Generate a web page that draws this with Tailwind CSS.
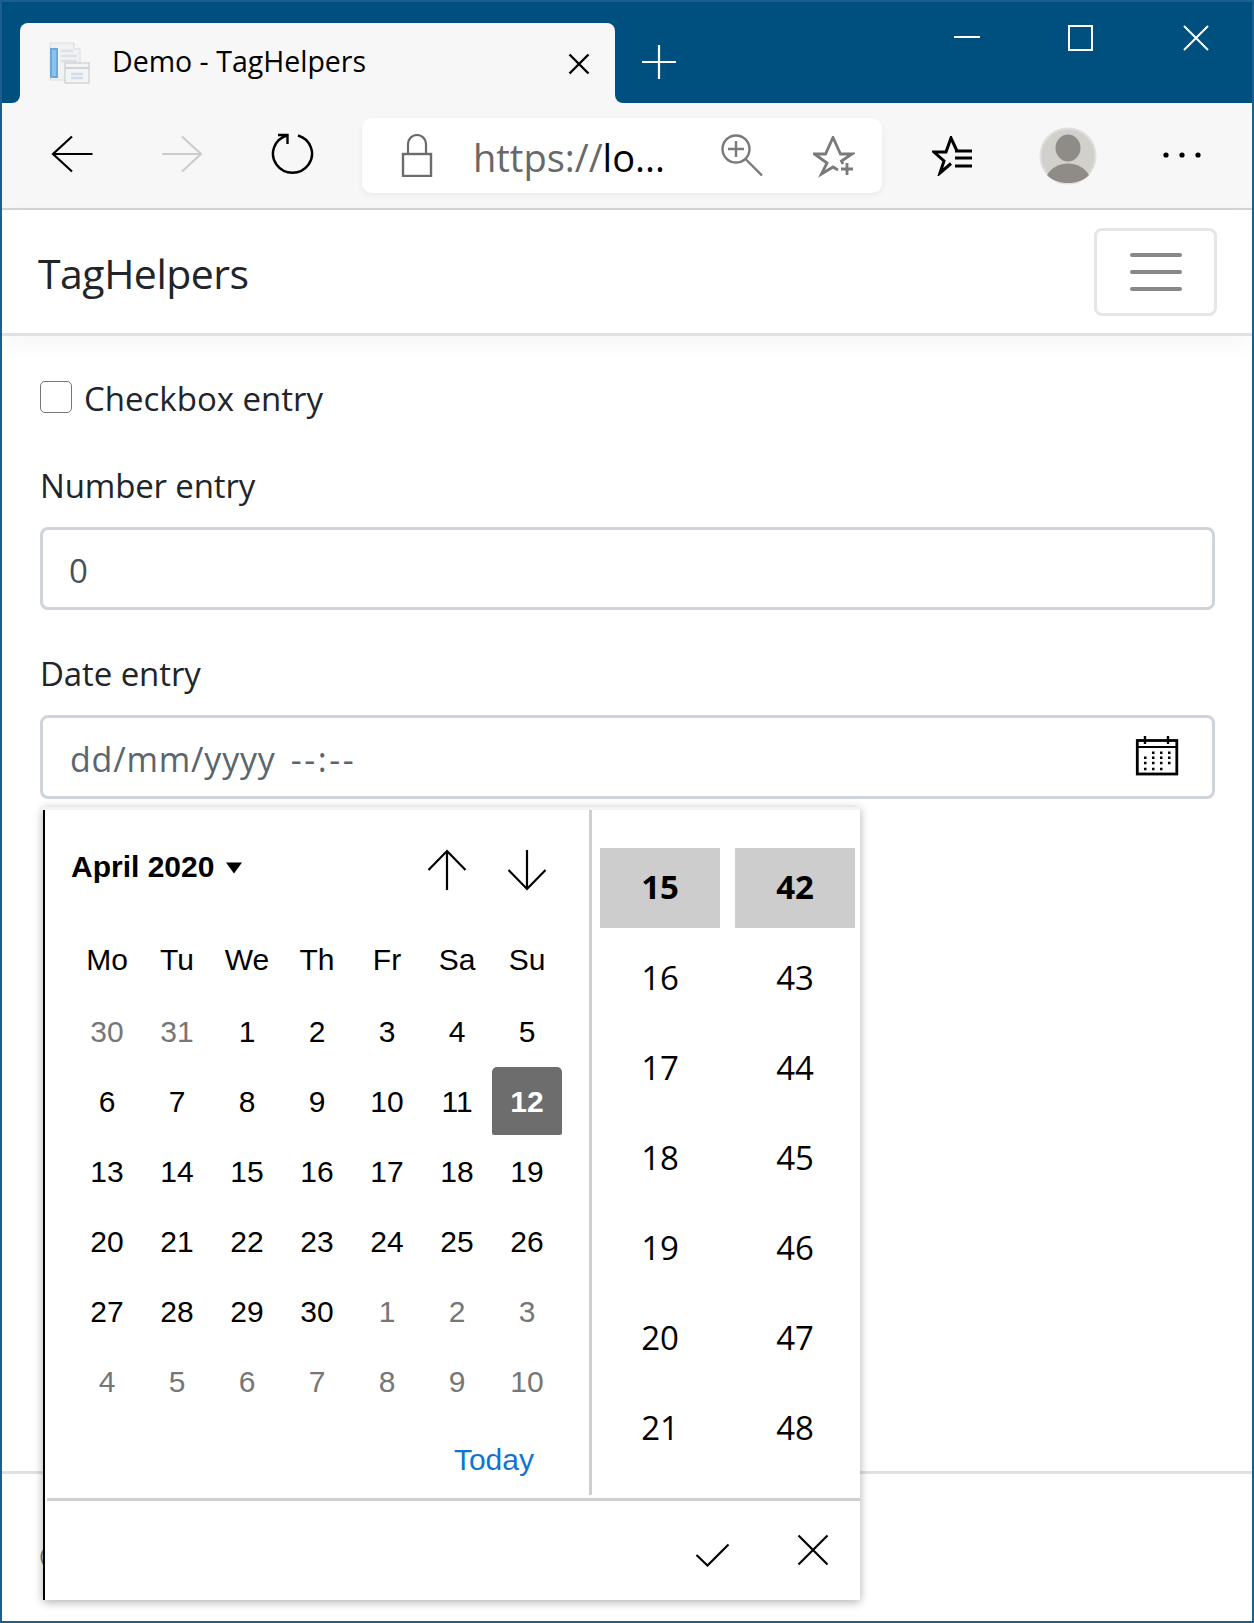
<!DOCTYPE html>
<html lang="en">
<head>
<meta charset="utf-8">
<title>Demo - TagHelpers</title>
<script src="https://cdn.jsdelivr.net/npm/@tailwindcss/browser@4"></script>
</head>
<body class="m-0 bg-white">
<div class="relative w-[1254px] h-[1623px] overflow-hidden border-2 border-[#1a5f8e] flex flex-col bg-white font-['Open_Sans',sans-serif] text-[#212529]">

  <!-- title bar -->
  <div class="relative h-[101px] shrink-0 bg-[#00507f] flex">
    <div class="relative ml-[18px] mt-[21px] w-[595px] h-[80px] bg-[#f7f7f7] rounded-t-lg flex items-center">
      <span class="absolute -left-2 bottom-0 w-2 h-2 bg-[#f7f7f7]"><span class="block w-2 h-2 bg-[#00507f] rounded-br-lg"></span></span>
      <span class="absolute -right-2 bottom-0 w-2 h-2 bg-[#f7f7f7]"><span class="block w-2 h-2 bg-[#00507f] rounded-bl-lg"></span></span>
      <svg class="ml-[27px] shrink-0" width="44" height="42" viewBox="0 0 44 42">
        <path d="M3 1H27L33 7V38H3Z" fill="#eff1f3" stroke="#dedede"/>
        <path d="M27 1V7H33" fill="#fafafa" stroke="#d8d8d8"/>
        <rect x="3" y="6" width="8" height="30" fill="#6aa9de"/>
        <rect x="5" y="8" width="4" height="26" fill="#8fc0ea"/>
        <path d="M14 9H26M14 14H30M14 19H30" stroke="#dde1e6" stroke-width="2.5"/>
        <rect x="18" y="21" width="24" height="20" fill="#f3f4f5" stroke="#c6c6c6"/>
        <path d="M18 26H42" stroke="#c9c9c9" stroke-width="1.5"/>
        <path d="M24 32H36M24 36H36" stroke="#d3dce6" stroke-width="2.5"/>
      </svg>
      <span class="ml-[21px] mb-[3px] text-[28.5px] leading-none text-black whitespace-nowrap">Demo - TagHelpers</span>
      <svg class="absolute left-[548px] top-[30px]" width="22" height="22" viewBox="0 0 22 22"><path d="M1.5 1.5L20.5 20.5M20.5 1.5L1.5 20.5" stroke="#000" stroke-width="2.4" fill="none"/></svg>
    </div>
    <svg class="ml-[26px] mt-[42px]" width="36" height="36" viewBox="0 0 36 36"><path d="M18 1V35M1 18H35" stroke="#fff" stroke-width="2.2" fill="none"/></svg>
    <svg class="absolute left-[952px] top-[33px]" width="26" height="4" viewBox="0 0 26 4"><path d="M0 2H26" stroke="#fff" stroke-width="2"/></svg>
    <svg class="absolute left-[1066px] top-[23px]" width="25" height="26" viewBox="0 0 25 26"><rect x="1" y="1" width="23" height="24" fill="none" stroke="#fff" stroke-width="2"/></svg>
    <svg class="absolute left-[1181px] top-[23px]" width="26" height="26" viewBox="0 0 26 26"><path d="M1 1L25 25M25 1L1 25" stroke="#fff" stroke-width="2" fill="none"/></svg>
  </div>

  <!-- toolbar -->
  <div class="h-[107px] shrink-0 bg-[#f7f7f7] border-b-2 border-[#d3d3d3] flex items-start">
    <svg class="ml-[49px] mt-[32px] shrink-0" width="42" height="38" viewBox="0 0 42 38"><path d="M21 1.5L2 19L21 36.5M2 19H41.5" stroke="#000" stroke-width="2.2" fill="none"/></svg>
    <svg class="ml-[68px] mt-[32px] shrink-0" width="42" height="38" viewBox="0 0 42 38"><path d="M21 1.5L40 19L21 36.5M40 19H1" stroke="#cccccc" stroke-width="2.2" fill="none"/></svg>
    <svg class="ml-[67px] mt-[30px] shrink-0" width="44" height="42" viewBox="0 0 44 42"><path d="M28 2.5A19.5 19 0 1 1 17 2.5M8 2H17.5V11" stroke="#000" stroke-width="2.4" fill="none"/></svg>
    <div class="ml-[48px] mt-[15px] w-[520px] h-[75px] bg-white rounded-[10px] shadow-[0_2px_6px_rgba(0,0,0,0.06)] flex items-center shrink-0 relative">
      <svg class="absolute left-[39px] top-[16px]" width="32" height="43" viewBox="0 0 32 43"><path d="M7 20V10A9 9 0 0 1 25 10V20" stroke="#6b6b6b" stroke-width="2.2" fill="none"/><rect x="2" y="20" width="28" height="22" fill="none" stroke="#6b6b6b" stroke-width="2.4"/></svg>
      <span class="absolute left-[111px] top-[14px] text-[38px] leading-[50px] whitespace-nowrap text-[#686868]">https://<span class="text-black">lo...</span></span>
      <svg class="absolute left-[359px] top-[16px]" width="42" height="42" viewBox="0 0 42 42"><circle cx="15" cy="15" r="13.5" fill="none" stroke="#7a7a7a" stroke-width="2.4"/><path d="M24.5 25L41 41.5M15 7V23M7 15H23" stroke="#7a7a7a" stroke-width="2.4" fill="none"/></svg>
      <svg class="absolute left-[451px] top-[18px]" width="42" height="42" viewBox="0 0 42 42"><path d="M30 28L28.5 25L39 18H27.5L20 1.5L12.5 18H1.5L14 27L8.5 38L20 31L25 34" stroke="#7a7a7a" stroke-width="2.8" fill="none"/><path d="M34 27V39M28 33H40" stroke="#7a7a7a" stroke-width="2.8" fill="none"/></svg>
    </div>
    <svg class="ml-[50px] mt-[33px] shrink-0" width="42" height="40" viewBox="0 0 42 40"><path d="M25 15L19 2L14 16H2L12 25L8 37L19 27.5" stroke="#000" stroke-width="3" fill="none"/><path d="M23 15H40M23 22H40M23 30H40" stroke="#000" stroke-width="2.8" fill="none"/></svg>
    <svg class="ml-[65px] mt-[24px] shrink-0" width="58" height="58" viewBox="0 0 58 58"><circle cx="29" cy="29" r="27.5" fill="#d1d0cd" stroke="#e0dfdc" stroke-width="2"/><ellipse cx="29" cy="21" rx="12.5" ry="13.5" fill="#8f8c88"/><path d="M8 48C12 41 20 36.5 29 36.5C38 36.5 46 41 50 48C45 53.5 37 56 29 56C21 56 13 53.5 8 48Z" fill="#8f8c88"/></svg>
    <svg class="ml-[63px] mt-[49px] shrink-0" width="46" height="6" viewBox="0 0 46 6"><circle cx="6" cy="3" r="2.6" fill="#000"/><circle cx="22" cy="3" r="2.6" fill="#000"/><circle cx="38" cy="3" r="2.6" fill="#000"/></svg>
  </div>

  <!-- navbar -->
  <nav class="relative z-10 h-[126px] shrink-0 bg-white border-b-[3px] border-[#dee2e6] shadow-[0_8px_22px_rgba(0,0,0,0.04)] flex items-center justify-between pl-[36px] pr-[35px]">
    <span class="mt-[2px] text-[41px] leading-[50px] text-[#212529] tracking-[-0.5px]">TagHelpers</span>
    <button class="w-[123px] h-[88px] rounded-[8px] border-[3px] border-[#e6e6e6] flex flex-col items-center justify-center gap-[13px]">
      <span class="block w-[52px] h-[4px] rounded-full bg-[#888888]"></span>
      <span class="block w-[52px] h-[4px] rounded-full bg-[#888888]"></span>
      <span class="block w-[52px] h-[4px] rounded-full bg-[#888888]"></span>
    </button>
  </nav>

  <!-- form -->
  <main class="pl-[38px] pr-[37px] pt-[45px]">
    <label class="flex items-center h-[32px]">
      <input type="checkbox" class="appearance-none w-[32px] h-[32px] rounded-[5px] border border-[#767676] bg-white shrink-0">
      <span class="ml-[12px] mt-[4px] text-[33px] leading-[50px] text-[#212529]">Checkbox entry</span>
    </label>
    <div class="mt-[48px] h-[50px] mb-[16px] text-[33px] leading-[50px] tracking-[-0.15px]">Number entry</div>
    <div class="h-[83px] rounded-[8px] border-[3px] border-[#ced4da] flex items-center pl-[26px] text-[33px] text-[#495057]"><span class="mt-[5px]">0</span></div>
    <div class="mt-[39px] h-[50px] mb-[16px] text-[33px] leading-[50px] tracking-[-0.1px]">Date entry</div>
    <div class="h-[84px] rounded-[8px] border-[3px] border-[#ced4da] flex items-center justify-between pl-[27px] pr-[33px] text-[34px] text-[#5a6570]">
      <span class="mt-[4px] whitespace-nowrap tracking-[0.8px]">dd/mm/yyyy<span class="ml-[15px] tracking-[2.6px]">--:--</span></span>
      <svg class="mb-[2px]" width="44" height="40" viewBox="0 0 44 40"><rect x="2.3" y="4.5" width="39.5" height="33.5" fill="none" stroke="#000" stroke-width="2.8"/><path d="M2 11H42" stroke="#000" stroke-width="2.2"/><path d="M10 0V8M33 0V8" stroke="#000" stroke-width="2.4"/><path d="M17 16.7H38M9 21.7H38M9 27H38M9 33H29" stroke="#000" stroke-width="2.5" stroke-dasharray="2.5 5.5" fill="none"/></svg>
    </div>
  </main>

  <!-- footer -->
  <footer class="mt-auto h-[150px] shrink-0 border-t-[3px] border-[#dee2e6] pl-[37px] pt-[58px] text-[32px] leading-[50px] text-[#6c757d]">© 2020 - TagHelpers</footer>

  <!-- date-time picker popup -->
  <div class="absolute left-[41px] top-[805px] w-[817px] h-[793px] z-20 bg-white shadow-[0_2px_9px_rgba(0,0,0,0.32)] flex flex-col font-['Liberation_Sans',sans-serif] text-black">
    <div class="-ml-[2px] h-[3px] shrink-0 bg-[#f3f3f3]"></div>
    <div class="flex-1 border-l-2 border-black flex flex-col min-h-0">
      <div class="h-[685px] shrink-0 flex">
        <!-- calendar -->
        <div class="w-[544px] shrink-0 flex flex-col">
          <div class="h-[114px] shrink-0 flex items-center relative">
            <span class="ml-[26px] text-[30px] font-bold leading-none">April 2020</span>
            <svg class="ml-[11px] mt-[1px]" width="18" height="12" viewBox="0 0 18 12"><path d="M1 0.5H17L9 11.5Z" fill="#000"/></svg>
            <svg class="absolute left-[382px] top-[39px]" width="40" height="42" viewBox="0 0 40 42"><path d="M1.5 21L20 2L38.5 21M20 2V41" stroke="#000" stroke-width="2.2" fill="none"/></svg>
            <svg class="absolute left-[462px] top-[39px]" width="40" height="42" viewBox="0 0 40 42"><path d="M1.5 21L20 40L38.5 21M20 40V1" stroke="#000" stroke-width="2.2" fill="none"/></svg>
          </div>
          <div class="ml-[27px] grid grid-cols-[repeat(7,70px)] h-[70px] shrink-0 items-center text-center text-[30px]">
            <span>Mo</span><span>Tu</span><span>We</span><span>Th</span><span>Fr</span><span>Sa</span><span>Su</span>
          </div>
          <div class="ml-[27px] mt-[2px] grid grid-cols-[repeat(7,70px)] auto-rows-[70px] shrink-0 items-center justify-items-center text-[30px]">
            <span class="text-[#767676]">30</span><span class="text-[#767676]">31</span><span>1</span><span>2</span><span>3</span><span>4</span><span>5</span>
            <span>6</span><span>7</span><span>8</span><span>9</span><span>10</span><span>11</span>
            <span class="w-[70px] h-[68px] rounded-t-[5px] rounded-b-[2px] bg-[#6d6d6d] text-white font-bold flex items-center justify-center">12</span>
            <span>13</span><span>14</span><span>15</span><span>16</span><span>17</span><span>18</span><span>19</span>
            <span>20</span><span>21</span><span>22</span><span>23</span><span>24</span><span>25</span><span>26</span>
            <span>27</span><span>28</span><span>29</span><span>30</span><span class="text-[#767676]">1</span><span class="text-[#767676]">2</span><span class="text-[#767676]">3</span>
            <span class="text-[#767676]">4</span><span class="text-[#767676]">5</span><span class="text-[#767676]">6</span><span class="text-[#767676]">7</span><span class="text-[#767676]">8</span><span class="text-[#767676]">9</span><span class="text-[#767676]">10</span>
          </div>
          <div class="mt-[19px] h-[50px] pr-[55px] text-right text-[30px] leading-[50px] text-[#0f74d1]">Today</div>
        </div>
        <div class="w-[3px] shrink-0 bg-[#cfcfcf]"></div>
        <!-- time columns -->
        <div class="flex-1 pl-[8px] pt-[38px] flex gap-[15px] font-['Open_Sans',sans-serif] text-[33px]">
          <div class="w-[120px] flex flex-col gap-[10px] text-center leading-[80px]">
            <span class="h-[80px] bg-[#cdcdcd] font-bold leading-[78px]">15</span><span class="h-[80px]">16</span><span class="h-[80px]">17</span><span class="h-[80px]">18</span><span class="h-[80px]">19</span><span class="h-[80px]">20</span><span class="h-[80px]">21</span>
          </div>
          <div class="w-[120px] flex flex-col gap-[10px] text-center leading-[80px]">
            <span class="h-[80px] bg-[#cdcdcd] font-bold leading-[78px]">42</span><span class="h-[80px]">43</span><span class="h-[80px]">44</span><span class="h-[80px]">45</span><span class="h-[80px]">46</span><span class="h-[80px]">47</span><span class="h-[80px]">48</span>
          </div>
        </div>
      </div>
      <div class="mt-[3px] ml-[2px] h-[3px] shrink-0 bg-[#cfcfcf]"></div>
      <div class="flex-1 flex items-center justify-end pr-[31px]">
        <svg class="mt-[8px] mr-[67px]" width="35" height="24" viewBox="0 0 35 24"><path d="M1.5 12L12.5 22.5L33.5 1.5" stroke="#000" stroke-width="2.2" fill="none"/></svg>
        <svg class="mb-[2px]" width="32" height="32" viewBox="0 0 32 32"><path d="M1.5 1.5L30.5 30.5M30.5 1.5L1.5 30.5" stroke="#000" stroke-width="2.2" fill="none"/></svg>
      </div>
    </div>
  </div>
</div>
</body>
</html>
